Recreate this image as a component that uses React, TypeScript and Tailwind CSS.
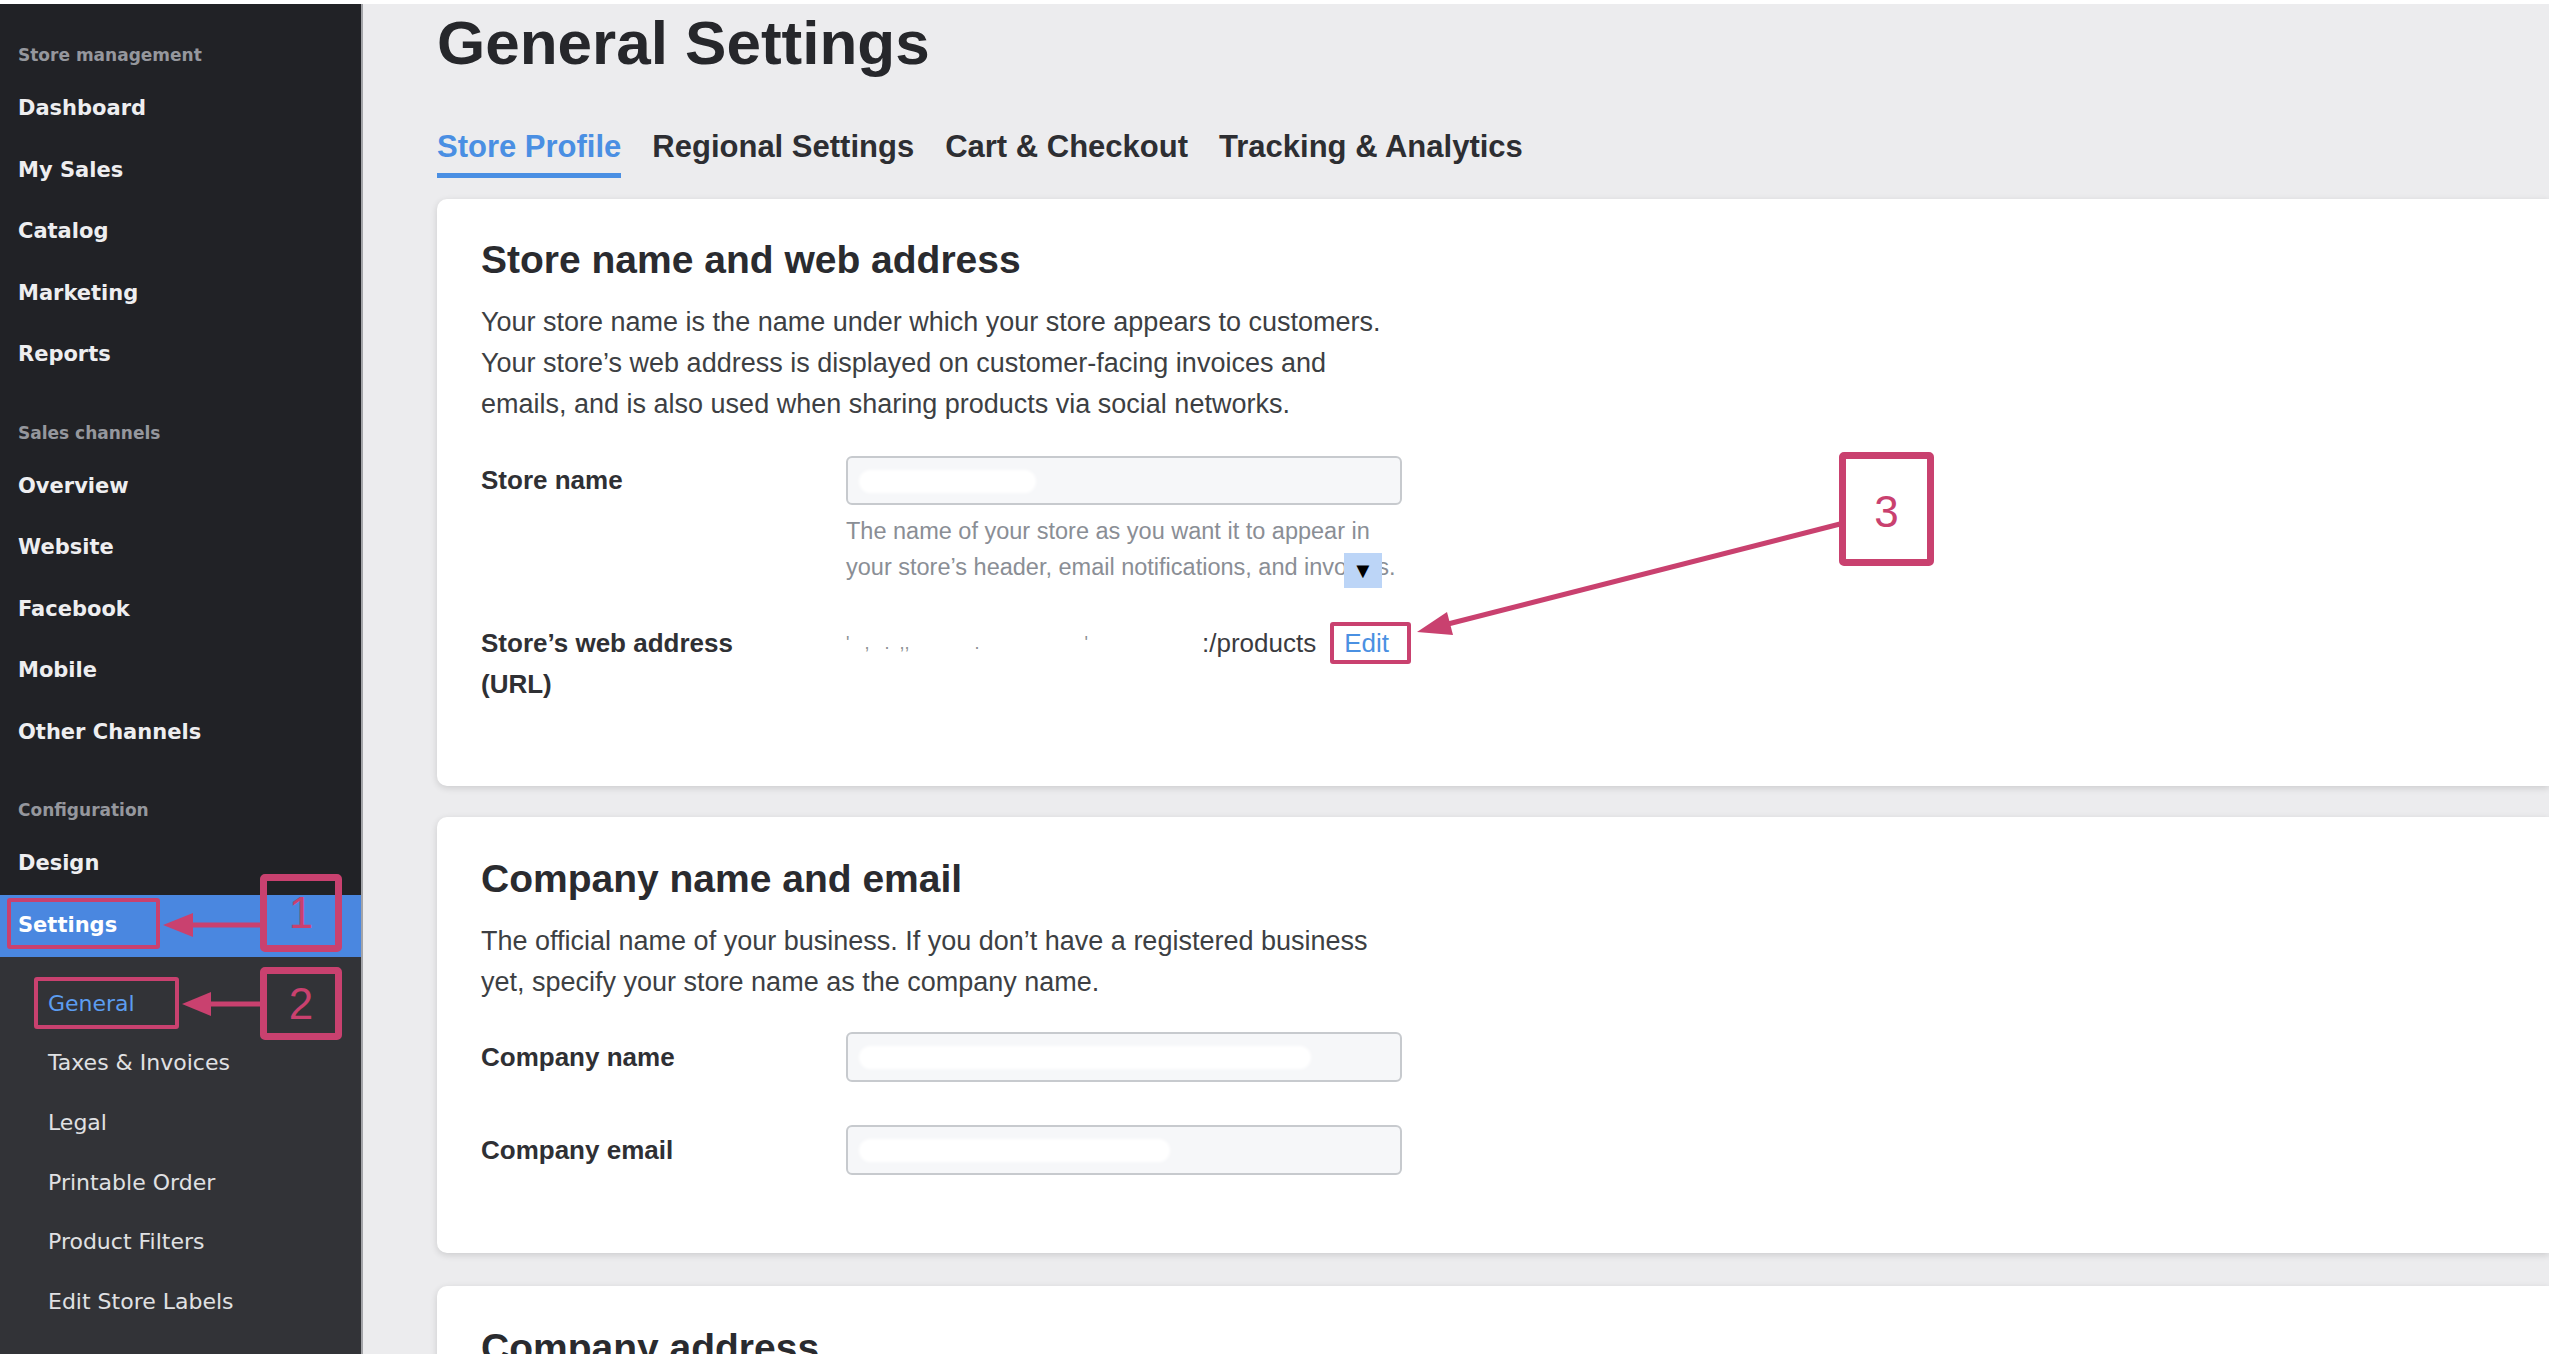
import type { ReactNode } from 'react';

const mainNav = {
  store: ['Dashboard', 'My Sales', 'Catalog', 'Marketing', 'Reports'],
  channels: ['Overview', 'Website', 'Facebook', 'Mobile', 'Other Channels'],
};

const settingsSub = ['General', 'Taxes & Invoices', 'Legal', 'Printable Order', 'Product Filters', 'Edit Store Labels'];

function SectionLabel({ children, className = '' }: { children: ReactNode; className?: string }) {
  return (
    <div className={`flex h-[44px] items-center pl-[18px] text-[17px] font-bold text-[#95979d] ${className}`}>
      {children}
    </div>
  );
}

function NavItem({ label }: { label: string }) {
  return (
    <div className="flex h-[61.5px] items-center pl-[18px] text-[21px] font-bold text-[#eeeef0]">
      {label}
    </div>
  );
}

// Sidebar
function Sidebar() {
  return (
    <aside className="flex w-[363px] shrink-0 flex-col border-r-2 border-[#a4a5a9] font-['DejaVu_Sans',sans-serif]">
      <div className="bg-[#212226] pt-[30px]">
        <SectionLabel>Store management</SectionLabel>
        {mainNav.store.map((label) => (
          <NavItem key={label} label={label} />
        ))}
        <SectionLabel className="mt-[26px]">Sales channels</SectionLabel>
        {mainNav.channels.map((label) => (
          <NavItem key={label} label={label} />
        ))}
        <SectionLabel className="mt-[26px]">Configuration</SectionLabel>
        <NavItem label="Design" />
      </div>
      <div className="flex h-[62px] items-center bg-[#4a87e0] pl-[18px] text-[21px] font-bold text-white">
        Settings
      </div>
      <div className="flex-1 bg-[#323337] pt-[17px]">
        {settingsSub.map((label, idx) => (
          <div
            key={label}
            className={`flex h-[59.6px] items-center pl-[48px] text-[22px] ${
              idx === 0 ? 'text-[#5c9df0]' : 'text-[#e0e1e3]'
            }`}
          >
            {label}
          </div>
        ))}
      </div>
    </aside>
  );
}

function TextInput({ blob }: { blob: string }) {
  return (
    <div className="relative h-full w-[556px] rounded-[6px] border-2 border-[#c7cace] bg-[#f6f7f9]">
      <div className={`absolute left-[11px] top-[12px] h-[23px] rounded-full bg-white blur-[1.5px] ${blob}`} />
    </div>
  );
}

function Card({ children, className = '' }: { children: ReactNode; className?: string }) {
  return (
    <section className={`rounded-l-[10px] bg-white pl-[44px] shadow-[0_2px_7px_rgba(0,0,0,0.14)] ${className}`}>
      {children}
    </section>
  );
}

function CardTitle({ children }: { children: ReactNode }) {
  return <h2 className="text-[39px] font-bold leading-[48px] text-[#2a2b2f]">{children}</h2>;
}

// Annotation overlay
function Annotations() {
  return (
    <div className="pointer-events-none absolute inset-0">
      <svg className="absolute inset-0" width="2552" height="1354" viewBox="0 0 2552 1354">
        <line x1="262" y1="925" x2="188" y2="925" stroke="#c9416f" strokeWidth="5" />
        <polygon points="163,925 193,913 193,937" fill="#c9416f" />
        <line x1="262" y1="1004" x2="206" y2="1004" stroke="#c9416f" strokeWidth="5" />
        <polygon points="182,1004 211,992 211,1016" fill="#c9416f" />
        <line x1="1840" y1="524" x2="1448" y2="624" stroke="#c9416f" strokeWidth="5" />
        <polygon points="1417,632 1453,635 1447,612" fill="#c9416f" />
      </svg>

      <div className="absolute left-[7px] top-[898px] h-[51px] w-[153px] rounded-[3px] border-[4px] border-[#c9416f]" />
      <div className="absolute left-[34px] top-[977px] h-[52px] w-[145px] rounded-[3px] border-[4px] border-[#c9416f]" />

      <div className="absolute left-[260px] top-[874px] flex h-[78px] w-[82px] items-center justify-center rounded-[5px] border-[7px] border-[#c9416f] text-[44px] leading-none text-[#c9416f]">
        1
      </div>
      <div className="absolute left-[260px] top-[967px] flex h-[73px] w-[82px] items-center justify-center rounded-[5px] border-[7px] border-[#c9416f] text-[44px] leading-none text-[#c9416f]">
        2
      </div>
      <div className="absolute left-[1839px] top-[452px] flex h-[114px] w-[95px] items-center justify-center rounded-[5px] border-[7px] border-[#c9416f] pt-[6px] text-[44px] leading-none text-[#c9416f]">
        3
      </div>
    </div>
  );
}

export default function App() {
  return (
    <div className="relative h-[1354px] w-[2552px] overflow-hidden bg-white pt-[4px] font-['Liberation_Sans',Arial,sans-serif]">
      <div className="flex h-[1350px]">
        <Sidebar />

        {/* Main Content */}
        <main className="mr-[3px] flex-1 overflow-hidden bg-[#ececee] pl-[74px] pt-[8px]">
          <h1 className="h-[62px] text-[62px] font-bold leading-[62px] text-[#26272b]">General Settings</h1>

          <div className="mt-[52.5px] flex gap-[31px] text-[31px] font-bold leading-[40px]">
            <div className="border-b-[5px] border-[#4a8fe3] pb-[6px] text-[#4a8fe3]">Store Profile</div>
            <div className="text-[#2d2e32]">Regional Settings</div>
            <div className="text-[#2d2e32]">Cart &amp; Checkout</div>
            <div className="text-[#2d2e32]">Tracking &amp; Analytics</div>
          </div>

          <Card className="mt-[21.5px] pb-[81.5px] pt-[37px]">
            <CardTitle>Store name and web address</CardTitle>
            <p className="mt-[17.5px] text-[27px] leading-[41px] text-[#3d3f43]">
              Your store name is the name under which your store appears to customers.
              <br />
              Your store’s web address is displayed on customer-facing invoices and
              <br />
              emails, and is also used when sharing products via social networks.
            </p>

            <div className="mt-[31.5px] flex h-[49px]">
              <div className="w-[365px] text-[26px] font-bold leading-[49px] text-[#2f3034]">Store name</div>
              <TextInput blob="w-[177px]" />
            </div>
            <div className="relative ml-[365px] mt-[8px] w-[560px] text-[23.5px] leading-[36px] text-[#8a8e95]">
              The name of your store as you want it to appear in
              <br />
              your store’s header, email notifications, and invoices.
              <div className="absolute left-[498px] top-[40px] flex h-[35px] w-[38px] items-center justify-center bg-[#bcd5f7] text-[22px] leading-none text-black">
                ▼
              </div>
            </div>

            <div className="mt-[37.5px] flex">
              <div className="w-[365px] text-[26px] font-bold leading-[41px] text-[#2f3034]">
                Store’s web address
                <br />
                (URL)
              </div>
              <div className="flex h-[41px] items-center text-[26px] text-[#3a3b3f]">
                <span className="w-[356px] whitespace-pre text-[18px] text-[#8d8f93]">
                  {'\'   ,   .  ,,             .                     \''}
                </span>
                <span>:/products</span>
                <span className="ml-[14px] rounded-[3px] border-[4px] border-[#c9416f] pl-[10px] pr-[18px] leading-[34px] text-[#4a90e2]">
                  Edit
                </span>
              </div>
            </div>
          </Card>

          <Card className="mt-[31px] pb-[78px] pt-[38px]">
            <CardTitle>Company name and email</CardTitle>
            <p className="mt-[17.5px] text-[27px] leading-[41px] text-[#3d3f43]">
              The official name of your business. If you don’t have a registered business
              <br />
              yet, specify your store name as the company name.
            </p>
            <div className="mt-[29.5px] flex h-[50px]">
              <div className="w-[365px] text-[26px] font-bold leading-[50px] text-[#2f3034]">Company name</div>
              <TextInput blob="w-[452px]" />
            </div>
            <div className="mt-[43px] flex h-[50px]">
              <div className="w-[365px] text-[26px] font-bold leading-[50px] text-[#2f3034]">Company email</div>
              <TextInput blob="w-[311px]" />
            </div>
          </Card>

          <Card className="mt-[33px] pb-[60px] pt-[38px]">
            <CardTitle>Company address</CardTitle>
          </Card>
        </main>
      </div>

      <Annotations />
    </div>
  );
}
